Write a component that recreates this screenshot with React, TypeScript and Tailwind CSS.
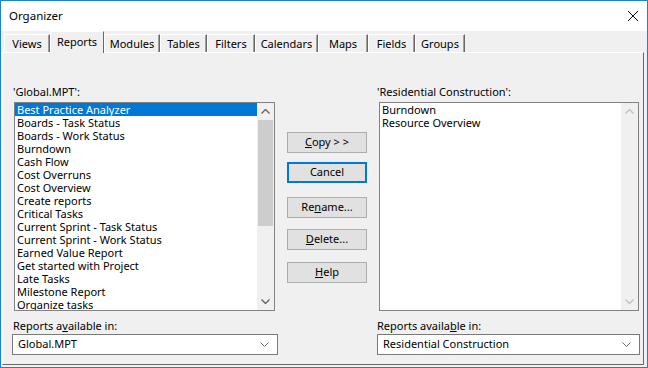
import { ReactNode } from "react";

const globalReports = [
  "Best Practice Analyzer",
  "Boards - Task Status",
  "Boards - Work Status",
  "Burndown",
  "Cash Flow",
  "Cost Overruns",
  "Cost Overview",
  "Create reports",
  "Critical Tasks",
  "Current Sprint - Task Status",
  "Current Sprint - Work Status",
  "Earned Value Report",
  "Get started with Project",
  "Late Tasks",
  "Milestone Report",
  "Organize tasks",
];

const projectReports = ["Burndown", "Resource Overview"];

const tabs = [
  { name: "Views", w: "w-[46px]" },
  { name: "Reports", w: "w-[54px]", active: true },
  { name: "Modules", w: "w-[56px]" },
  { name: "Tables", w: "w-[47px]" },
  { name: "Filters", w: "w-[48px]" },
  { name: "Calendars", w: "w-[63px]" },
  { name: "Maps", w: "w-[50px]" },
  { name: "Fields", w: "w-[47px]" },
  { name: "Groups", w: "w-[50px]" },
];

function Chevron({ up, color, thin }: { up?: boolean; color: string; thin?: boolean }) {
  return (
    <svg width="9" height="5" viewBox="0 0 9 5">
      <polyline
        points={up ? "0.5,4.5 4.5,0.5 8.5,4.5" : "0.5,0.5 4.5,4.5 8.5,0.5"}
        fill="none"
        stroke={color}
        strokeWidth={thin ? "1" : "1.3"}
      />
    </svg>
  );
}

function ListBox({
  items,
  selected,
  enabled,
  width,
}: {
  items: string[];
  selected?: number;
  enabled?: boolean;
  width: string;
}) {
  const arrow = enabled ? "#606060" : "#c0c0c0";
  return (
    <div className={`ml-[2px] flex h-[209px] ${width} border border-[#828282] bg-white`}>
      <div className="flex-1 overflow-hidden">
        {items.map((item, i) => (
          <div
            key={item}
            className={`h-[13px] whitespace-nowrap pl-[2px] leading-[13px] ${
              i === selected ? "bg-[#0078d7] text-white" : "text-black"
            }`}
          >
            {item}
          </div>
        ))}
      </div>
      <div className="flex w-[17px] flex-col bg-[#f0f0f0]">
        <div className="flex h-[17px] items-center justify-center">
          <Chevron up color={arrow} />
        </div>
        {enabled && <div className="mx-[1px] h-[106px] bg-[#cdcdcd]" />}
        <div className="flex-1" />
        <div className="flex h-[17px] items-center justify-center">
          <Chevron color={arrow} />
        </div>
      </div>
    </div>
  );
}

function Combo({ value, width }: { value: string; width: string }) {
  return (
    <div
      className={`mt-[1px] flex h-[21px] ${width} items-center justify-between border border-[#7a7a7a] bg-white pl-[5px] pr-[8px]`}
    >
      <span>{value}</span>
      <Chevron color="#6a6a6a" thin />
    </div>
  );
}

function Button({ children, def, mt }: { children: ReactNode; def?: boolean; mt: string }) {
  return (
    <div
      className={`${mt} flex h-[21px] w-[80px] items-center justify-center bg-[#e1e1e1] ${
        def ? "border-2 border-[#0078d7]" : "border border-[#adadad]"
      }`}
    >
      {children}
    </div>
  );
}

export default function App() {
  return (
    <div className="flex h-[368px] w-[648px] flex-col border border-[#1883d7] bg-[#f0f0f0] font-['Noto_Sans',sans-serif] text-[11px] text-black">
      {/* Title bar */}
      <div className="flex h-[30px] items-center justify-between bg-white pl-[8px] pr-[9px]">
        <span className="text-[11.5px]">Organizer</span>
        <svg width="10" height="10" viewBox="0 0 10 10">
          <path d="M0 0 L10 10 M10 0 L0 10" stroke="#111" strokeWidth="1" />
        </svg>
      </div>

      {/* Tabs */}
      <div className="flex h-[21px] items-end pl-[3px]">
        {tabs.map((t) =>
          t.active ? (
            <div
              key={t.name}
              className={`relative z-10 -mb-px flex h-[22px] ${t.w} justify-center border-l border-t border-r border-l-white border-t-white border-r-[#696969] bg-[#f0f0f0] pt-[2px] leading-[15px]`}
            >
              {t.name}
            </div>
          ) : (
            <div
              key={t.name}
              className={`flex h-[18px] ${t.w} items-center justify-center border-l border-t border-r border-l-white border-t-white border-r-[#696969] pt-[1px] shadow-[inset_-1px_0_#a0a0a0]`}
            >
              {t.name}
            </div>
          ),
        )}
      </div>

      {/* Panel */}
      <div className="mb-[2px] ml-[1px] mr-[3px] flex flex-1 border border-b-[#696969] border-l-white border-r-[#696969] border-t-white">
        {/* Left column */}
        <div className="ml-[9px] flex w-[266px] flex-col">
          <div className="mt-[31px] h-[15px] pl-[1px] leading-[15px]">'Global.MPT':</div>
          <div className="mt-[3px]">
            <ListBox items={globalReports} selected={0} enabled width="w-[261px]" />
          </div>
          <div className="mt-[7px] h-[15px] pl-[1px] leading-[15px]">
            Reports a<span className="underline">v</span>ailable in:
          </div>
          <Combo value="Global.MPT" width="w-[266px]" />
        </div>

        {/* Buttons */}
        <div className="ml-[9px] flex flex-col">
          <Button mt="mt-[79px]">
            <span>
              <span className="underline">C</span>opy &gt; &gt;
            </span>
          </Button>
          <Button mt="mt-[9px]" def>
            Cancel
          </Button>
          <Button mt="mt-[14px]">
            <span>
              Re<span className="underline">n</span>ame...
            </span>
          </Button>
          <Button mt="mt-[11px]">
            <span>
              <span className="underline">D</span>elete...
            </span>
          </Button>
          <Button mt="mt-[12px]">
            <span>
              <span className="underline">H</span>elp
            </span>
          </Button>
        </div>

        {/* Right column */}
        <div className="ml-[10px] flex w-[263px] flex-col">
          <div className="mt-[31px] h-[15px] leading-[15px]">'Residential Construction':</div>
          <div className="mt-[3px]">
            <ListBox items={projectReports} width="w-[260px]" />
          </div>
          <div className="mt-[7px] h-[15px] leading-[15px]">
            Reports availa<span className="underline">b</span>le in:
          </div>
          <Combo value="Residential Construction" width="w-[263px]" />
        </div>
      </div>
    </div>
  );
}
